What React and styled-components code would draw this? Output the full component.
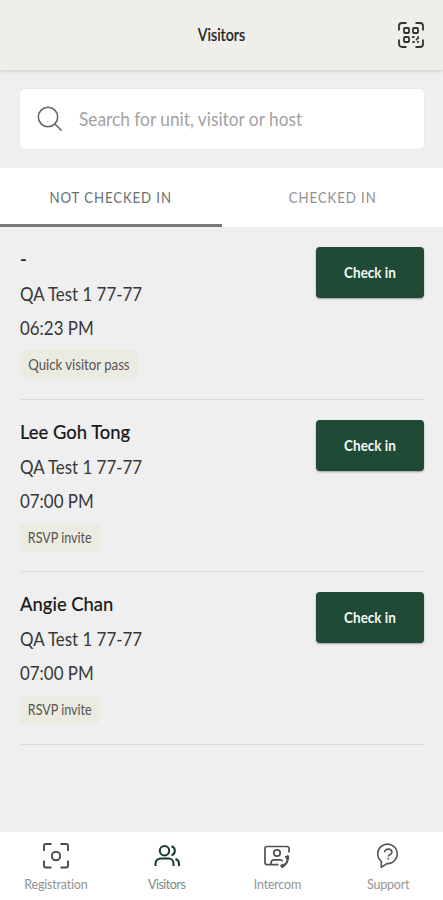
import React, { useState } from 'react'
import styled, { createGlobalStyle } from 'styled-components'

const GlobalStyle = createGlobalStyle`
    *{
        box-sizing: border-box;
    }
    body{
        margin: 0;
        background: #efefef;
        font-family: Lato, "Liberation Sans", sans-serif;
    }
    button{
        font-family: inherit;
        border: none;
        padding: 0;
        background: none;
        cursor: pointer;
    }
`
const Page = styled.div`
    width: 100%;
    height: 100vh;
    min-height: 900px;
    display: flex;
    flex-direction: column;
    background: #efefef;
`
const Header = styled.header`
    height: 70px;
    flex: none;
    display: grid;
    grid-template-columns: 26px 1fr 26px;
    align-items: center;
    padding: 0 19px;
    background: #efeeea;
    box-shadow: 0 1px 3px rgba(0, 0, 0, 0.16);
    h1{
        grid-column: 2;
        margin: 0;
        text-align: center;
        font-size: 17.5px;
        font-weight: 500;
        line-height: 24px;
        transform: scaleX(.815);
        color: #222;
        -webkit-text-stroke: .2px #222;
    }
    svg{
        display: block;
    }
`
const SearchBar = styled.label`
    height: 60px;
    flex: none;
    margin: 19px 19px 19px 20px;
    padding: 0 17px;
    display: flex;
    align-items: center;
    gap: 16px;
    background: #fff;
    border-radius: 5px;
    box-shadow: 0 0 2px rgba(0, 0, 0, 0.08);
    input{
        flex: 1;
        min-width: 0;
        border: none;
        outline: none;
        padding: 0 0 2px;
        background: none;
        font-family: inherit;
        font-size: 19px;
        transform: scaleX(.91);
        transform-origin: left;
        color: #333;
        &::placeholder{
            color: #a2a2a2;
            opacity: 1;
        }
    }
`
const Tabs = styled.div`
    height: 59px;
    flex: none;
    display: flex;
    background: #fff;
`
const Tab = styled.button`
    flex: 1;
    padding-top: 3px;
    font-size: 14.5px;
    letter-spacing: 1px;
    color: ${({ $active }) => ($active ? '#65706c' : '#909090')};
    border-bottom: 3px solid ${({ $active }) => ($active ? '#797979' : 'transparent')};
    span{
        display: block;
        transform: scaleX(.91);
    }
`
const List = styled.main`
    flex: 1;
    padding: 0 19px 0 20px;
`
const Row = styled.article`
    height: 172.5px;
    padding-top: 20px;
    display: flex;
    justify-content: space-between;
    align-items: flex-start;
    border-bottom: 1.5px solid #dcdcdc;
`
const Info = styled.div`
    display: flex;
    flex-direction: column;
    align-items: flex-start;
`
const Name = styled.h2`
    margin: 0;
    font-size: 20px;
    font-weight: 500;
    line-height: 23px;
    height: 30px;
    transform: scaleX(.92);
    transform-origin: left;
    color: #191919;
    -webkit-text-stroke: .1px #191919;
`
const Line = styled.p`
    margin: 0;
    font-size: 19.5px;
    line-height: 34px;
    transform: scaleX(.867);
    transform-origin: left;
    color: #383838;
`
const Tag = styled.span`
    height: 29px;
    margin-top: 5px;
    padding: 0 9px;
    line-height: 29px;
    border-radius: 5px;
    background: #ecebe1;
    font-size: 14.5px;
    transform: scaleX(${({ $squeeze }) => $squeeze});
    transform-origin: left;
    color: #555550;
`
const CheckIn = styled.button`
    width: 108px;
    height: 51px;
    padding-bottom: 1px;
    border-radius: 4px;
    background: #1e4a36;
    box-shadow: 0 1px 2px rgba(0, 0, 0, 0.35);
    color: #f4f7f5;
    font-size: 15.5px;
    font-weight: 700;
    span{
        display: block;
        transform: scaleX(.87);
    }
`
const BottomNav = styled.nav`
    height: 68px;
    flex: none;
    display: grid;
    grid-template-columns: repeat(4, 1fr);
    background: #fff;
`
const NavItem = styled.button`
    display: flex;
    flex-direction: column;
    align-items: center;
    padding: 10px 0 0 1px;
    gap: 5px;
    font-size: 12.5px;
    line-height: 19px;
    letter-spacing: ${({ $active }) => ($active ? '-.5px' : '-.2px')};
    color: ${({ $active }) => ($active ? '#7b8782' : '#929292')};
    svg{
        display: block;
    }
`

const QrIcon = () => (
    <svg width="26" height="26" viewBox="0 0 26 26" fill="none" stroke="#333" strokeWidth="1.8">
        <path d="M1 8.5V4a3 3 0 0 1 3-3h4.5M17.5 1H22a3 3 0 0 1 3 3v4.5M25 17.5V22a3 3 0 0 1-3 3h-4.5M8.5 25H4a3 3 0 0 1-3-3v-4.5" />
        <rect x="6" y="6" width="5" height="5" rx="1" />
        <rect x="15" y="6" width="5" height="5" rx="1" />
        <rect x="6" y="15" width="5" height="5" rx="1" />
        <path d="M14.2 15h2.3M14.5 20h2.2M17.8 17.5h1.5M20 14.2v3M20 19v1.8" />
    </svg>
)

const SearchIcon = () => (
    <svg width="26" height="26" viewBox="0 0 26 26" fill="none" stroke="#666" strokeWidth="1.6" strokeLinecap="round">
        <circle cx="11" cy="11" r="9.7" />
        <path d="M18 18l6.2 6.2" />
    </svg>
)

const ScanIcon = () => (
    <svg width="28" height="28" viewBox="0 0 28 28" fill="none" stroke="#4a4a4a" strokeWidth="1.9">
        <path d="M2 9V4a2 2 0 0 1 2-2h5.5M18.5 2H24a2 2 0 0 1 2 2v5M26 18.5v5a2 2 0 0 1-2 2h-5.5M9.5 25.5H4a2 2 0 0 1-2-2v-5" />
        <circle cx="14" cy="14" r="4.2" />
    </svg>
)

const VisitorsIcon = () => (
    <svg width="28" height="28" viewBox="0 0 28 28" fill="none" stroke="#163b2d" strokeWidth="2">
        <circle cx="11.5" cy="8.7" r="4.7" />
        <path d="M2.5 24v-2.5a5 5 0 0 1 5-5h8a5 5 0 0 1 5 5V24" />
        <path d="M18.5 4.2a4.7 4.7 0 0 1 0 9M22.5 17a5 5 0 0 1 3.5 4.7V24" />
    </svg>
)

const IntercomIcon = () => (
    <svg width="28" height="28" viewBox="0 0 28 28" fill="none" stroke="#505050" strokeWidth="1.7">
        <path d="M15.5 22.7H3.8A1.8 1.8 0 0 1 2 20.9V6.3a1.8 1.8 0 0 1 1.8-1.8h20.4A1.8 1.8 0 0 1 26 6.3v4.2" />
        <circle cx="14" cy="11" r="3.2" />
        <path d="M8 22.4v-1.6a3 3 0 0 1 3-3h6a3 3 0 0 1 2.6 1.4" />
        <path d="M24.7 14c.9 5.4-1.9 9.6-6.4 10.4" strokeWidth="2.2" />
        <path d="M21.8 14.2l3.5-1.3 1.2 3.3-3.2 1.6zM16.8 23.2l3.4-1.8 2 2.6-3 2.4z" fill="#505050" stroke="none" />
    </svg>
)

const SupportIcon = () => (
    <svg width="28" height="28" viewBox="0 0 28 28" fill="none" stroke="#555" strokeWidth="1.6" strokeLinejoin="round">
        <path d="M7.3 25.2V19.4A9.7 9.7 0 1 1 13 21.6z" />
        <path d="M10.6 10.2c0-4.2 7.3-3.9 7.3 0 0 3-3.6 2.2-3.6 4.4M14.3 15.8v1.6" />
    </svg>
)

const visitors = [
    { name: '-', time: '06:23 PM', tag: 'Quick visitor pass', squeeze: 0.91 },
    { name: 'Lee Goh Tong', time: '07:00 PM', tag: 'RSVP invite', squeeze: 0.865 },
    { name: 'Angie Chan', time: '07:00 PM', tag: 'RSVP invite', squeeze: 0.865 },
]

const navItems = [
    { label: 'Registration', Icon: ScanIcon },
    { label: 'Visitors', Icon: VisitorsIcon },
    { label: 'Intercom', Icon: IntercomIcon },
    { label: 'Support', Icon: SupportIcon },
]

function App() {
    const [tab, setTab] = useState('pending')

    return (
        <Page>
            <GlobalStyle />
            <Header>
                <h1>Visitors</h1>
                <QrIcon />
            </Header>
            <SearchBar>
                <SearchIcon />
                <input placeholder="Search for unit, visitor or host" />
            </SearchBar>
            <Tabs>
                <Tab $active={tab === 'pending'} onClick={() => setTab('pending')}><span>NOT CHECKED IN</span></Tab>
                <Tab $active={tab === 'done'} onClick={() => setTab('done')}><span>CHECKED IN</span></Tab>
            </Tabs>
            <List>
                {visitors.map((v) => (
                    <Row key={v.name}>
                        <Info>
                            <Name>{v.name}</Name>
                            <Line>QA Test 1 77-77</Line>
                            <Line>{v.time}</Line>
                            <Tag $squeeze={v.squeeze}>{v.tag}</Tag>
                        </Info>
                        <CheckIn><span>Check in</span></CheckIn>
                    </Row>
                ))}
            </List>
            <BottomNav>
                {navItems.map(({ label, Icon }) => (
                    <NavItem key={label} $active={label === 'Visitors'}>
                        <Icon />
                        {label}
                    </NavItem>
                ))}
            </BottomNav>
        </Page>
    )
}

export default App
